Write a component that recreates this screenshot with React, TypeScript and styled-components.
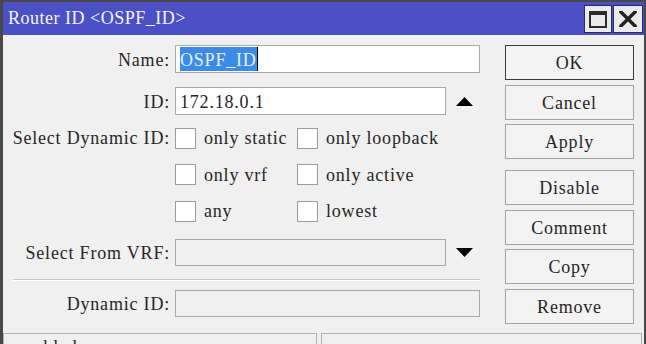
import React from "react"
import styled, { createGlobalStyle } from "styled-components"

const GlobalStyle = createGlobalStyle`
  html, body {
    margin: 0;
    padding: 0;
    background: #f0f0f0;
  }
`

const Window = styled.div`
  width: 646px;
  height: 344px;
  box-sizing: border-box;
  border-left: 3px solid #484848;
  border-right: 2px solid #484848;
  border-top: 2px solid #484848;
  background: #f0f0f0;
  overflow: hidden;
  display: flex;
  flex-direction: column;
  color: #262626;
  font-family: "Liberation Serif", "DejaVu Serif", serif;
  font-size: 18px;
  letter-spacing: 0.8px;
`

const TitleBar = styled.div`
  height: 33px;
  flex-shrink: 0;
  background: #4b50c5;
  display: flex;
  align-items: center;
  padding: 0 1px 0 5px;
`

const Title = styled.div`
  flex: 1;
  color: #f4f4f4;
  letter-spacing: 0.5px;
`

const TitleButtons = styled.div`
  align-self: flex-start;
  margin-top: 3px;
  display: flex;
  gap: 1px;
`

const TitleButton = styled.div<{ $w: number }>`
  width: ${p => p.$w}px;
  height: 28px;
  box-sizing: border-box;
  border: 1px solid #2a2c5e;
  background: #ebebeb;
  display: flex;
  align-items: center;
  justify-content: center;
`

const Body = styled.div`
  height: 298px;
  flex-shrink: 0;
  display: flex;
`

const Form = styled.div`
  width: 477px;
  padding-top: 10px;
  display: flex;
  flex-direction: column;
`

const Row = styled.div<{ $gap: number; $top?: boolean }>`
  display: grid;
  grid-template-columns: 167px 305px;
  column-gap: 5px;
  align-items: ${p => (p.$top ? "start" : "center")};
  margin-top: ${p => p.$gap}px;
`

const Label = styled.div<{ $lh?: number }>`
  text-align: right;
  padding-top: 2px;
  ${p => p.$lh && `line-height: ${p.$lh}px; padding-top: 0;`}
`

const FieldLine = styled.div`
  display: flex;
  align-items: center;
`

const Field = styled.div<{ $short?: boolean; $off?: boolean; $h?: number }>`
  width: ${p => (p.$short ? 271 : 305)}px;
  height: ${p => p.$h ?? 28}px;
  box-sizing: border-box;
  border: 1px solid #a9a9a9;
  background: ${p => (p.$off ? "#f0f0f0" : "#ffffff")};
  padding: 2px 0 0 4px;
  display: flex;
  align-items: center;
  white-space: nowrap;
  overflow: hidden;
`

const Selected = styled.span`
  display: inline-block;
  height: 24px;
  line-height: 26px;
  margin-top: -2px;
  background: #3c8ce5;
  color: #e4eeff;
  border-right: 1px solid #000;
`

const Arrow = styled.svg`
  margin-left: 10px;
  flex-shrink: 0;
`

const CheckGrid = styled.div`
  display: grid;
  grid-template-columns: 122px auto;
  grid-auto-rows: 22px;
  row-gap: 14.5px;
`

const Check = styled.div`
  display: flex;
  align-items: center;
  gap: 8px;
`

const Box = styled.div`
  width: 21px;
  height: 21px;
  box-sizing: border-box;
  border: 1px solid #9c9c9c;
  background: #ffffff;
  flex-shrink: 0;
`

const CheckText = styled.span`
  padding-top: 1px;
`

const Separator = styled.div`
  margin: 13px 0 0 10px;
  width: 467px;
  border-top: 1px solid #c6c6c6;
  border-bottom: 1px solid #ffffff;
`

const Buttons = styled.div`
  margin-left: 25px;
  width: 129px;
  padding-top: 10px;
  display: flex;
  flex-direction: column;
`

const Group = styled.div<{ $gap?: number }>`
  display: flex;
  flex-direction: column;
  gap: 4.5px;
  margin-top: ${p => p.$gap ?? 0}px;
`

const Button = styled.div<{ $primary?: boolean }>`
  height: 35px;
  box-sizing: border-box;
  border: 1px solid ${p => (p.$primary ? "#3a3a3a" : "#a3a3a3")};
  background: #f3f3f3;
  display: flex;
  align-items: center;
  justify-content: center;
  padding-top: 2px;
`

const StatusBar = styled.div`
  flex: 1;
  display: flex;
  gap: 4px;
  padding-right: 2px;
`

const StatusPanel = styled.div<{ $w?: number }>`
  ${p => (p.$w ? `width: ${p.$w}px;` : "flex: 1;")}
  box-sizing: border-box;
  border: 1px solid #b2b2b2;
  border-bottom: none;
  padding: 3px 0 0 12px;
  white-space: nowrap;
`

const UpArrow = () => (
  <Arrow width="17" height="9" viewBox="0 0 17 9">
    <polygon points="8.5,0 17,9 0,9" fill="#000" />
  </Arrow>
)

const DownArrow = () => (
  <Arrow width="17" height="9" viewBox="0 0 17 9">
    <polygon points="0,0 17,0 8.5,9" fill="#000" />
  </Arrow>
)

const checks = [
  ["only static", "only loopback"],
  ["only vrf", "only active"],
  ["any", "lowest"],
]

export default function App() {
  return (
    <>
      <GlobalStyle />
      <Window>
        <TitleBar>
          <Title>Router ID &lt;OSPF_ID&gt;</Title>
          <TitleButtons>
            <TitleButton $w={28}>
              <svg width="18" height="17" viewBox="0 0 18 17">
                <rect x="1" y="1" width="16" height="15" fill="none" stroke="#2b2b2b" strokeWidth="2" />
                <rect x="0" y="0" width="18" height="4" fill="#2b2b2b" />
              </svg>
            </TitleButton>
            <TitleButton $w={30}>
              <svg width="18" height="16" viewBox="0 0 18 16">
                <path d="M2 1 L16 15 M16 1 L2 15" stroke="#232323" strokeWidth="3.4" strokeLinecap="square" />
              </svg>
            </TitleButton>
          </TitleButtons>
        </TitleBar>
        <Body>
          <Form>
            <Row $gap={0}>
              <Label>Name:</Label>
              <Field>
                <Selected>OSPF_ID</Selected>
              </Field>
            </Row>
            <Row $gap={14}>
              <Label>ID:</Label>
              <FieldLine>
                <Field $short>172.18.0.1</Field>
                <UpArrow />
              </FieldLine>
            </Row>
            <Row $gap={12} $top>
              <Label $lh={22}>Select Dynamic ID:</Label>
              <CheckGrid>
                {checks.flat().map(c => (
                  <Check key={c}>
                    <Box />
                    <CheckText>{c}</CheckText>
                  </Check>
                ))}
              </CheckGrid>
            </Row>
            <Row $gap={17}>
              <Label>Select From VRF:</Label>
              <FieldLine>
                <Field $short $off $h={27} />
                <DownArrow />
              </FieldLine>
            </Row>
            <Separator />
            <Row $gap={9}>
              <Label>Dynamic ID:</Label>
              <Field $off $h={27} />
            </Row>
          </Form>
          <Buttons>
            <Group>
              <Button $primary>OK</Button>
              <Button>Cancel</Button>
              <Button>Apply</Button>
            </Group>
            <Group $gap={11}>
              <Button>Disable</Button>
              <Button>Comment</Button>
              <Button>Copy</Button>
              <Button>Remove</Button>
            </Group>
          </Buttons>
        </Body>
        <StatusBar>
          <StatusPanel $w={314}>enabled</StatusPanel>
          <StatusPanel />
        </StatusBar>
      </Window>
    </>
  )
}
